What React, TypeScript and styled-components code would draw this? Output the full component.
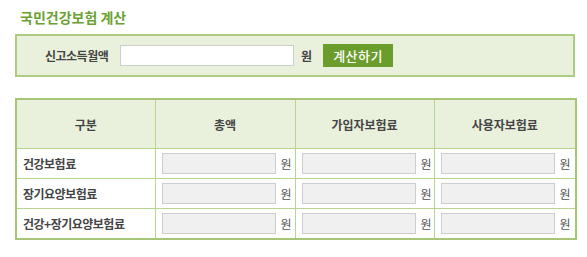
import React from "react";
import styled, { createGlobalStyle } from "styled-components";

const Global = createGlobalStyle`
  html, body { margin: 0; padding: 0; background: #fff; }
  body { font-family: "Noto Sans CJK KR", "Noto Sans", sans-serif; color: #333; }
`;

const Page = styled.div`
  padding: 7px 12px 0 15px;
  width: 560px;
`;

const Title = styled.h2`
  margin: 0 0 0 5px;
  height: 27px;
  font-size: 14px;
  line-height: 20px;
  font-weight: 700;
  color: #6ba132;
  letter-spacing: 0;
`;

const SearchBox = styled.div`
  box-sizing: border-box;
  height: 43px;
  border: 2px solid #aecb82;
  background: #e9f1dd;
  display: flex;
  align-items: center;
  padding-left: 28px;
`;

const Label = styled.span`
  font-size: 12px;
  font-weight: 700;
  color: #444;
  width: 75px;
  letter-spacing: -0.5px;
`;

const TextInput = styled.input<{ $w: number; $gray?: boolean }>`
  box-sizing: border-box;
  width: ${(p) => p.$w}px;
  height: 21px;
  border: 1px solid #cdcdcd;
  background: ${(p) => (p.$gray ? "#f0f0f0" : "#fff")};
  margin: 0;
  padding: 0 4px;
  outline: none;
`;

const Unit = styled.span<{ $bold?: boolean }>`
  font-size: 12px;
  font-weight: ${(p) => (p.$bold ? 700 : 400)};
  color: ${(p) => (p.$bold ? "#444" : "#555")};
  margin-left: ${(p) => (p.$bold ? 7 : 5)}px;
`;

const Button = styled.button`
  box-sizing: border-box;
  height: 23px;
  width: 70px;
  margin-left: 11px;
  border: 0;
  background: #6b9d2c;
  color: #fff;
  font-family: inherit;
  font-size: 13px;
  font-weight: 500;
  letter-spacing: 0.5px;
  padding: 0;
  cursor: pointer;
`;

const Table = styled.table`
  margin-top: 21px;
  width: 560px;
  border-collapse: collapse;
  border: 2px solid #a6c676;
  table-layout: fixed;
`;

const Col = styled.col<{ $w: number }>`
  width: ${(p) => p.$w}px;
`;

const Th = styled.th`
  height: 48px;
  background: #e9f1dd;
  border: 1px solid #b9d390;
  font-size: 12px;
  font-weight: 700;
  color: #444;
  padding: 0;
`;

const Td = styled.td<{ $label?: boolean }>`
  height: 29px;
  border: 1px solid #b9d390;
  padding: 0 0 0 6px;
  font-size: 12px;
  font-weight: ${(p) => (p.$label ? 700 : 400)};
  color: #444;
  letter-spacing: -0.5px;
`;

const Cell = styled.div`
  display: flex;
  align-items: center;
`;

const rows = ["건강보험료", "장기요양보험료", "건강+장기요양보험료"];
const heads = ["구분", "총액", "가입자보험료", "사용자보험료"];

export default function App() {
  return (
    <>
      <Global />
      <Page>
        <Title>국민건강보험 계산</Title>
        <SearchBox>
          <Label>신고소득월액</Label>
          <TextInput $w={174} />
          <Unit $bold>원</Unit>
          <Button>계산하기</Button>
        </SearchBox>
        <Table>
          <colgroup>
            <Col $w={139} />
            <Col $w={140} />
            <Col $w={139} />
            <Col $w={142} />
          </colgroup>
          <thead>
            <tr>
              {heads.map((h) => (
                <Th key={h}>{h}</Th>
              ))}
            </tr>
          </thead>
          <tbody>
            {rows.map((r) => (
              <tr key={r}>
                <Td $label>{r}</Td>
                {[0, 1, 2].map((i) => (
                  <Td key={i}>
                    <Cell>
                      <TextInput $w={114} $gray readOnly />
                      <Unit>원</Unit>
                    </Cell>
                  </Td>
                ))}
              </tr>
            ))}
          </tbody>
        </Table>
      </Page>
    </>
  );
}
